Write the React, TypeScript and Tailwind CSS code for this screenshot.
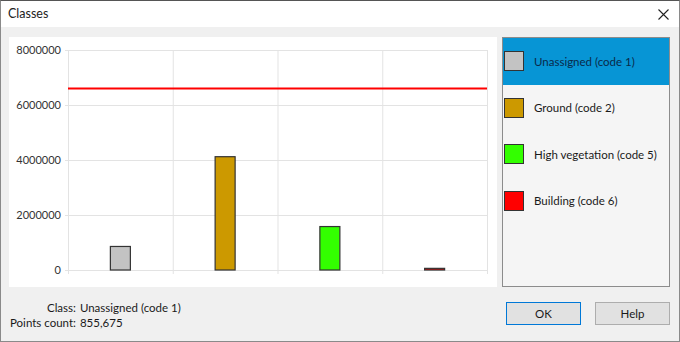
import React from 'react';

const font = { fontFamily: 'Lato, "Noto Sans", Arial, sans-serif' };

const classes = [
  { name: 'Unassigned (code 1)', color: '#c3c3c3', count: 855675 },
  { name: 'Ground (code 2)', color: '#cc9900', count: 4120000 },
  { name: 'High vegetation (code 5)', color: '#33ff00', count: 1580000 },
  { name: 'Building (code 6)', color: '#ff0000', count: 60000 },
];

function Chart() {
  // plot area inside the white panel
  const x0 = 59;
  const x1 = 478;
  const yTop = 13;
  const yZero = 233;
  const max = 8000000;
  const colW = (x1 - x0) / 4;
  const ticks = [0, 2000000, 4000000, 6000000, 8000000];
  const yOf = (v: number) => yZero - ((yZero - yTop) * v) / max;

  return (
    <svg width="488" height="250" className="block">
      {ticks.map((t) => (
        <g key={t}>
          <line x1={x0 - 3} x2={x1} y1={yOf(t) + 0.5} y2={yOf(t) + 0.5} stroke="#e3e3e3" />
          <text x={52} y={yOf(t) + 4} textAnchor="end" fontSize="11" fill="#333" style={font}>
            {t}
          </text>
        </g>
      ))}
      {[0, 1, 2, 3, 4].map((i) => (
        <line key={i} x1={x0 + i * colW + 0.5} x2={x0 + i * colW + 0.5} y1={yTop} y2={yZero + 4} stroke="#e3e3e3" />
      ))}
      {classes.map((c, i) => {
        const cx = x0 + colW * i + colW / 2;
        const top = yOf(c.count);
        const h = Math.max(yZero - top, 1.5);
        return (
          <rect
            key={c.name}
            x={cx - 10}
            y={yZero - h}
            width={20}
            height={h}
            fill={c.color}
            stroke="#333"
            strokeWidth="1.2"
          />
        );
      })}
      <line x1={x0} x2={x1} y1={51.5} y2={51.5} stroke="#ff0000" strokeWidth="2" />
    </svg>
  );
}

export default function App() {
  return (
    <div
      className="w-[680px] h-[342px] bg-[#f0f0f0] border border-t-[#555] border-x-[#8a8a8a] border-b-[#8a8a8a] flex flex-col text-[11.5px] text-[#1a1a1a] overflow-hidden"
      style={font}
    >
      {/* Title bar */}
      <div className="h-[26px] bg-white flex items-center justify-between pl-[7px] pr-[10px] shrink-0">
        <span className="text-[12.5px] text-[#222]">Classes</span>
        <svg width="11" height="11" viewBox="0 0 11 11" stroke="#222" strokeWidth="1.1">
          <path d="M0.5 0.5l10 10M10.5 0.5l-10 10" />
        </svg>
      </div>

      {/* Content */}
      <div className="flex gap-[5px] pl-[8px] pt-[10px]">
        <div className="w-[488px] h-[250px] bg-white">
          <Chart />
        </div>
        <div className="w-[168px] h-[250px] bg-[#f5f5f5] border border-[#8c8c8c] flex flex-col">
          {classes.map((c, i) => (
            <div
              key={c.name}
              className={`h-[46.5px] flex items-center pl-[1px] ${i === 0 ? 'bg-[#0795d5] text-[#0a2a4a]' : 'text-[#1a1a1a]'}`}
            >
              <div className="w-[20px] h-[20px] border border-[#333] shrink-0" style={{ background: c.color }} />
              <span className="ml-[10px] whitespace-nowrap">{c.name}</span>
            </div>
          ))}
        </div>
      </div>

      {/* Footer */}
      <div className="flex justify-between pl-[9px] pr-[9px] pt-[13px]">
        <div className="grid grid-cols-[auto_auto] gap-x-[4px] auto-rows-[15px] items-center whitespace-nowrap">
          <span className="text-right">Class:</span>
          <span>Unassigned (code 1)</span>
          <span className="text-right">Points count:</span>
          <span>855,675</span>
        </div>
        <div className="flex gap-[14px] pt-[2px]">
          <button className="w-[75px] h-[23px] bg-[#e1e1e1] border border-[#0078d7]">OK</button>
          <button className="w-[75px] h-[23px] bg-[#e1e1e1] border border-[#adadad]">Help</button>
        </div>
      </div>
    </div>
  );
}
